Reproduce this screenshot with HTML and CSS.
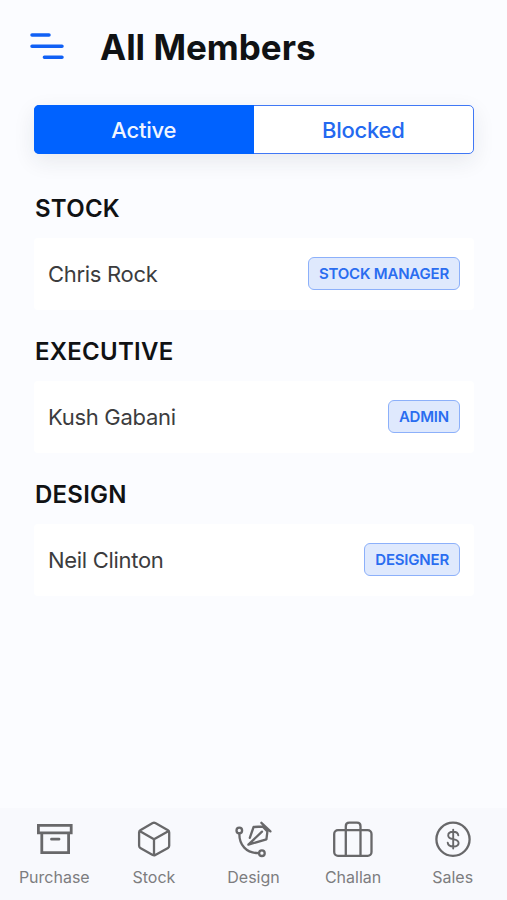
FILE: index.html
```html
<!DOCTYPE html>
<html lang="en">
<head>
<meta charset="utf-8">
<title>All Members</title>
<link rel="stylesheet" href="styles.css">
</head>
<body>
<header class="header">
  <svg class="menu" width="36" height="30" viewBox="0 0 36 30"><path d="M4 4H21M4 15.2H34M16.4 26.3H34"/></svg>
  <h1 class="title">All Members</h1>
</header>
<main class="content">
  <div class="tabs">
    <div class="tab tab-active">Active</div>
    <div class="tab">Blocked</div>
  </div>
  <section class="group">
    <h2 class="group-title">STOCK</h2>
    <div class="card"><span class="name">Chris Rock</span><span class="badge">STOCK MANAGER</span></div>
  </section>
  <section class="group">
    <h2 class="group-title">EXECUTIVE</h2>
    <div class="card"><span class="name">Kush Gabani</span><span class="badge">ADMIN</span></div>
  </section>
  <section class="group">
    <h2 class="group-title">DESIGN</h2>
    <div class="card"><span class="name">Neil Clinton</span><span class="badge">DESIGNER</span></div>
  </section>
</main>
<nav class="nav">
  <div class="item">
    <svg class="icon bold" viewBox="0 0 44 40"><path d="M6.4 6.4H39.2V13.8H6.4ZM9.8 13.8V33.6H36.6V13.8M19.5 20.2H27"/></svg>
    <span>Purchase</span>
  </div>
  <div class="item">
    <svg class="icon" viewBox="0 0 44 40"><path d="M20.7 4.1Q22 3.4 23.3 4.1L36 11.3Q37.2 12 37.2 13.4V26.8Q37.2 28.2 36 28.9L23.3 36.1Q22 36.8 20.7 36.1L8.3 28.9Q7.1 28.2 7.1 26.8V13.4Q7.1 12 8.3 11.3ZM7.6 12L22 20.3L36.7 12M22 20.3V36.4"/></svg>
    <span>Stock</span>
  </div>
  <div class="item">
    <svg class="icon" viewBox="0 0 44 40"><circle cx="8.3" cy="11.5" r="2.8"/><circle cx="30.9" cy="34.2" r="2.8"/><path d="M8.3 14.5C8.3 26 15 34.2 28 34.2M18.8 18.8L22.6 8L31.6 7.5M36.4 12.5L35.4 20.4L17.4 25.6M17.4 25.6L31 12.6M30.4 3.8L39.4 12.4M31.6 7.5L36.4 12.5"/></svg>
    <span>Design</span>
  </div>
  <div class="item">
    <svg class="icon" viewBox="0 0 44 40"><rect x="3.2" y="11.2" width="37.3" height="25.6" rx="3.8"/><path d="M14.8 36.5V7.2Q14.8 3.7 18.3 3.7H26Q29.5 3.7 29.5 7.2V36.5"/></svg>
    <span>Challan</span>
  </div>
  <div class="item">
    <svg class="icon" viewBox="0 0 44 40"><circle cx="22" cy="20.3" r="16.6"/><path class="thin" d="M22.2 10.6V29.6M27.3 16.3C27 14 25 12.8 22.2 12.8C19.2 12.8 17.2 14.2 17.2 16.4C17.2 18.8 19.2 19.5 22.2 20.1C25.4 20.7 27.6 21.5 27.6 24C27.6 26.2 25.4 27.5 22.3 27.5C19.1 27.5 17 26.2 16.7 23.6"/></svg>
    <span>Sales</span>
  </div>
</nav>
</body>
</html>
```

FILE: styles.css
```css
* { box-sizing: border-box; }
body {
  margin: 0;
  height: 900px;
  display: flex;
  flex-direction: column;
  background: #fbfcff;
  font-family: Inter, "Liberation Sans", sans-serif;
  overflow: hidden;
}
.header {
  height: 94px;
  padding-left: 28px;
  display: flex;
  align-items: center;
  gap: 36px;
}
.menu { fill: none; stroke: #1060f5; stroke-width: 3.5; stroke-linecap: round; margin-top: -2px; }
.title { margin: 0; font-size: 35px; font-weight: 700; line-height: 44px; color: #101214; }
.content { flex: 1; padding: 11px 33px 0 34px; }
.tabs {
  height: 49px;
  display: flex;
  border: 1px solid #4078f5;
  border-radius: 5px;
  background: #fff;
  box-shadow: 0 7px 22px rgba(30, 40, 60, 0.09);
}
.tab {
  flex: 1;
  display: flex;
  align-items: center;
  justify-content: center;
  padding-top: 1px;
  font-size: 22px;
  font-weight: 500;
  letter-spacing: -0.25px;
  color: #2469f0;
}
.tab-active { margin: -1px 0 -1px -1px; border-radius: 5px 0 0 5px; background: #0062ff; color: #f0f5ff; }
.group { padding-top: 40px; }
.group + .group { padding-top: 27px; }
.group-title { margin: 0 0 14px 1px; font-size: 24px; font-weight: 600; line-height: 30px; letter-spacing: 0.25px; color: #101214; }
.card {
  height: 72px;
  padding: 0 14px 2px;
  display: flex;
  align-items: center;
  justify-content: space-between;
  background: #fff;
  border-radius: 4px;
}
.name { padding-top: 2px; font-size: 22px; letter-spacing: -0.3px; color: #3c3c3e; }
.badge {
  height: 33px;
  padding: 0 10px;
  display: flex;
  align-items: center;
  border: 1px solid #8cb0fa;
  border-radius: 6px;
  background: #dfe9fd;
  color: #2a6df0;
  font-size: 15px;
  font-weight: 600;
  letter-spacing: -0.2px;
}
.nav {
  height: 92px;
  padding: 11px 4.5px 0;
  display: flex;
  background: #f8f9fd;
}
.item {
  flex: 1;
  display: flex;
  flex-direction: column;
  align-items: center;
  gap: 8px;
  font-size: 16px;
  line-height: 20px;
  color: #7d7d7f;
}
.icon { width: 44px; height: 40px; fill: none; stroke: #68686a; stroke-width: 2.3; stroke-linejoin: round; stroke-linecap: round; }
.bold { stroke-width: 2.8; stroke-linejoin: miter; }
.thin { stroke-width: 1.9; }
```
